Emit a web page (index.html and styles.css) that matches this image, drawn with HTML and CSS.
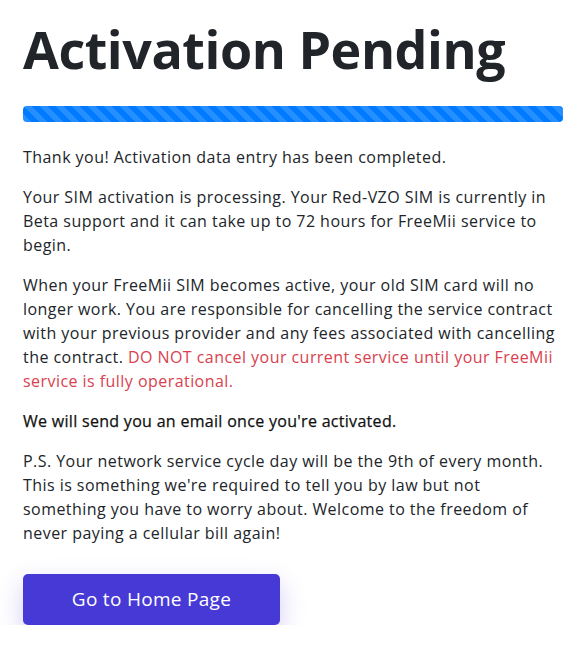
FILE: index.html
```html
<!DOCTYPE html>
<html lang="en">
<head>
    <meta charset="UTF-8">
    <title>Activation Pending</title>
    <link rel="stylesheet" href="styles.css">
</head>
<body>
    <div class="page">
        <h1>Activation Pending</h1>

        <!-- progress bar -->
        <div class="progress">
            <div class="progress-bar"></div>
        </div>

        <p>Thank you! Activation data entry has been completed.</p>
        <p>Your SIM activation is processing. Your Red-VZO SIM is currently in Beta support and it can take up to 72 hours for FreeMii service to begin.</p>
        <p>When your FreeMii SIM becomes active, your old SIM card will no longer work. You are responsible for cancelling the service contract with your previous provider and any fees associated with cancelling the contract. <span class="warning">DO NOT cancel your current service until your FreeMii service is fully operational.</span></p>
        <p class="notice">We will send you an email once you're activated.</p>
        <p>P.S. Your network service cycle day will be the 9th of every month. This is something we're required to tell you by law but not something you have to worry about. Welcome to the freedom of never paying a cellular bill again!</p>

        <a class="home-btn" href="#">Go to Home Page</a>
    </div>
</body>
</html>
```

FILE: styles.css
```css
body {
    margin: 0;
    font-family: 'Open Sans', sans-serif;
    background-color: #fff;
    color: #212529;
}

.page {
    width: 540px;
    padding: 18px 0 0 23px;
}

h1 {
    font-size: 52px;
    font-weight: 700;
    line-height: 62px;
    letter-spacing: -0.45px;
    margin: 0 0 26px;
    color: #212529;
}

.progress {
    height: 16px;
    border-radius: 4px;
    overflow: hidden;
    margin-bottom: 23px;
}

.progress-bar {
    height: 100%;
    background-color: #007bff;
    background-image: linear-gradient(45deg, rgba(255, 255, 255, .15) 25%, transparent 25%, transparent 50%, rgba(255, 255, 255, .15) 50%, rgba(255, 255, 255, .15) 75%, transparent 75%, transparent);
    background-size: 16px 16px;
}

p {
    font-size: 16px;
    line-height: 24px;
    letter-spacing: 0.45px;
    margin: 0 0 16px;
}

.warning {
    color: #d9414e;
}

/* a touch heavier than body text */
.notice {
    color: #111;
    letter-spacing: 0.3px;
    -webkit-text-stroke: 0.25px #111;
}

.home-btn {
    display: inline-block;
    margin-top: 13px;
    width: 257px;
    height: 51px;
    line-height: 51px;
    text-align: center;
    font-size: 19px;
    letter-spacing: 0.3px;
    color: #fff;
    text-decoration: none;
    background-color: #4639d6;
    border-radius: 5px;
    box-shadow: 0 10px 24px rgba(70, 57, 214, .25);
}
```
